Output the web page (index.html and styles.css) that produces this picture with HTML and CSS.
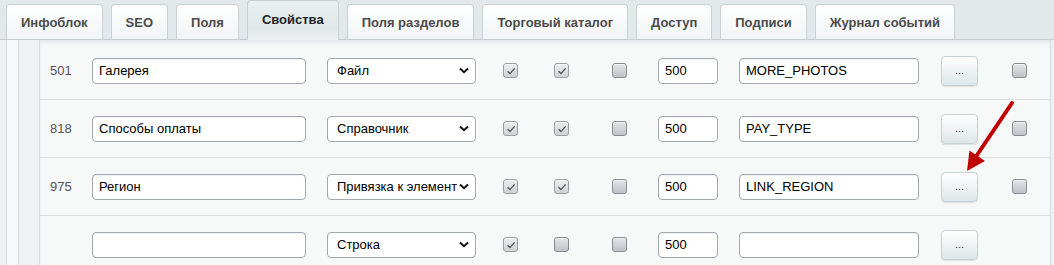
FILE: index.html
```html
<!DOCTYPE html>
<html lang="ru">
<head>
<meta charset="utf-8">
<link rel="stylesheet" href="styles.css">
</head>
<body>
<div class="page">
  <div class="tabs">
    <div class="tab">Инфоблок</div>
    <div class="tab">SEO</div>
    <div class="tab">Поля</div>
    <div class="tab active">Свойства</div>
    <div class="tab">Поля разделов</div>
    <div class="tab">Торговый каталог</div>
    <div class="tab">Доступ</div>
    <div class="tab">Подписи</div>
    <div class="tab">Журнал событий</div>
  </div>
  <div class="content">
    <div class="strip1"></div>
    <div class="strip2"></div>
    <div class="rows">
      <div class="row">
        <span class="id">501</span>
        <div class="inp name">Галерея</div>
        <div class="sel"><span class="sel-text">Файл</span><svg class="chev" width="10" height="7" viewBox="0 0 10 7"><path d="M1 1.5 L5 5.2 L9 1.5" fill="none" stroke="#111" stroke-width="2"/></svg></div>
        <span class="cb on"><svg width="12" height="12" viewBox="0 0 12 12"><path d="M2.5 6.2 L5 8.6 L9.6 3.4" fill="none" stroke="#555" stroke-width="1.4"/></svg></span>
        <span class="cb on"><svg width="12" height="12" viewBox="0 0 12 12"><path d="M2.5 6.2 L5 8.6 L9.6 3.4" fill="none" stroke="#555" stroke-width="1.4"/></svg></span>
        <span class="cb"></span>
        <div class="inp sort">500</div>
        <div class="inp code">MORE_PHOTOS</div>
        <div class="btn">...</div>
        <span class="cb"></span>
      </div>
      <div class="row">
        <span class="id">818</span>
        <div class="inp name">Способы оплаты</div>
        <div class="sel"><span class="sel-text">Справочник</span><svg class="chev" width="10" height="7" viewBox="0 0 10 7"><path d="M1 1.5 L5 5.2 L9 1.5" fill="none" stroke="#111" stroke-width="2"/></svg></div>
        <span class="cb on"><svg width="12" height="12" viewBox="0 0 12 12"><path d="M2.5 6.2 L5 8.6 L9.6 3.4" fill="none" stroke="#555" stroke-width="1.4"/></svg></span>
        <span class="cb on"><svg width="12" height="12" viewBox="0 0 12 12"><path d="M2.5 6.2 L5 8.6 L9.6 3.4" fill="none" stroke="#555" stroke-width="1.4"/></svg></span>
        <span class="cb"></span>
        <div class="inp sort">500</div>
        <div class="inp code">PAY_TYPE</div>
        <div class="btn">...</div>
        <span class="cb"></span>
      </div>
      <div class="row">
        <span class="id">975</span>
        <div class="inp name">Регион</div>
        <div class="sel"><span class="sel-text">Привязка к элементам</span><svg class="chev" width="10" height="7" viewBox="0 0 10 7"><path d="M1 1.5 L5 5.2 L9 1.5" fill="none" stroke="#111" stroke-width="2"/></svg></div>
        <span class="cb on"><svg width="12" height="12" viewBox="0 0 12 12"><path d="M2.5 6.2 L5 8.6 L9.6 3.4" fill="none" stroke="#555" stroke-width="1.4"/></svg></span>
        <span class="cb on"><svg width="12" height="12" viewBox="0 0 12 12"><path d="M2.5 6.2 L5 8.6 L9.6 3.4" fill="none" stroke="#555" stroke-width="1.4"/></svg></span>
        <span class="cb"></span>
        <div class="inp sort">500</div>
        <div class="inp code">LINK_REGION</div>
        <div class="btn">...</div>
        <span class="cb"></span>
      </div>
      <div class="row">
        <span class="id"></span>
        <div class="inp name"></div>
        <div class="sel"><span class="sel-text">Строка</span><svg class="chev" width="10" height="7" viewBox="0 0 10 7"><path d="M1 1.5 L5 5.2 L9 1.5" fill="none" stroke="#111" stroke-width="2"/></svg></div>
        <span class="cb on"><svg width="12" height="12" viewBox="0 0 12 12"><path d="M2.5 6.2 L5 8.6 L9.6 3.4" fill="none" stroke="#555" stroke-width="1.4"/></svg></span>
        <span class="cb"></span>
        <span class="cb"></span>
        <div class="inp sort">500</div>
        <div class="inp code"></div>
        <div class="btn">...</div>
        <span></span>
      </div>
    </div>
  </div>
  <svg class="arrow" width="1054" height="265" viewBox="0 0 1054 265">
    <line x1="1012" y1="103" x2="975" y2="158" stroke="#c00000" stroke-width="4" stroke-linecap="round"/>
    <polygon points="967,171 969.5,150.5 985,161" fill="#c00000"/>
  </svg>
</div>
</body>
</html>
```

FILE: styles.css
```css
* { box-sizing: border-box; }
html, body { margin: 0; padding: 0; }
body {
  background: #e3e9eb;
  font-family: "Liberation Sans", Arial, sans-serif;
  font-size: 13px;
  width: 1054px;
  height: 265px;
  overflow: hidden;
}
.page { position: relative; height: 265px; }

.tabs {
  display: flex;
  align-items: flex-end;
  gap: 8px;
  height: 39px;
  padding-left: 6px;
  position: relative;
  z-index: 2;
}
.tab {
  height: 35px;
  display: flex;
  align-items: center;
  padding: 1px 14px 0;
  border: 1px solid #c9d1d4;
  border-bottom: none;
  border-radius: 4px 4px 0 0;
  background: linear-gradient(#ffffff, #f1f4f5);
  color: #4b4b4b;
  font-weight: bold;
  white-space: nowrap;
}
.tab.active {
  height: 40px;
  margin-bottom: -1px;
  padding-top: 0;
  padding-bottom: 3px;
  background: linear-gradient(#eaeff0, #e2e8ea 70%, #edf1f2);
  border-color: #c7cfd2;
  color: #222;
}

.content {
  display: flex;
  height: 226px;
  border-top: 1px solid #c5cdd0;
  background: #eef2f3;
}
.strip1 {
  width: 12px;
  margin-left: 6px;
  border-left: 1px solid #d5dcdf;
  background: #f6f8f9;
}
.strip2 {
  width: 22px;
  border-left: 1px solid #d5dcdf;
  border-right: 1px solid #d5dcdf;
  background: #eef2f3;
}
.rows {
  flex: 1;
  margin-right: 3px;
  border-right: 1px solid #d5dcdf;
  background: #f7f8f8;
  padding-top: 2px;
  box-shadow: inset 0 4px 4px -2px rgba(120, 140, 150, 0.18);
}
.row {
  display: grid;
  grid-template-columns: 52px 235px 176px 51px 58px 46px 81px 202px 71px 1fr;
  align-items: center;
  height: 58px;
  border-bottom: 1px solid #dbdfe0;
}
.id {
  padding-left: 10px;
  color: #555;
  font-size: 13px;
}
.inp {
  height: 26px;
  border: 1px solid #a2a8ae;
  border-radius: 4px;
  background: #fff;
  color: #000;
  padding: 0 6px;
  display: flex;
  align-items: center;
  white-space: nowrap;
  overflow: hidden;
  box-shadow: inset 0 1px 1px rgba(0, 0, 0, 0.06);
}
.name { width: 214px; }
.sort { width: 60px; padding-left: 6px; }
.code { width: 180px; }
.sel {
  width: 149px;
  height: 26px;
  border: 1px solid #a2a8ae;
  border-radius: 4px;
  background: #fff;
  display: flex;
  align-items: center;
  padding: 0 6px 0 9px;
  color: #000;
}
.sel-text {
  flex: 1;
  min-width: 0;
  overflow: hidden;
  white-space: nowrap;
}
.chev { flex: none; margin-left: 2px; }
.cb {
  width: 15px;
  height: 15px;
  border: 1px solid #878c92;
  border-radius: 3px;
  background: linear-gradient(#e4e5e7, #bfc2c6);
  display: flex;
  align-items: center;
  justify-content: center;
  box-shadow: inset 0 1px 0 rgba(255, 255, 255, 0.6);
}
.cb.on {
  background: linear-gradient(#eceeef, #cfd2d5);
  border-color: #9a9fa4;
}
.btn {
  width: 37px;
  height: 30px;
  border: 1px solid #c9d1d4;
  border-radius: 4px;
  background: linear-gradient(#ffffff, #dfe6e8);
  display: flex;
  align-items: center;
  justify-content: center;
  font-size: 11px;
  color: #2d3a45;
  padding-bottom: 2px;
  box-shadow: 0 1px 1px rgba(0, 0, 0, 0.1);
}
.arrow {
  position: absolute;
  left: 0;
  top: 0;
  pointer-events: none;
  z-index: 5;
}
```
